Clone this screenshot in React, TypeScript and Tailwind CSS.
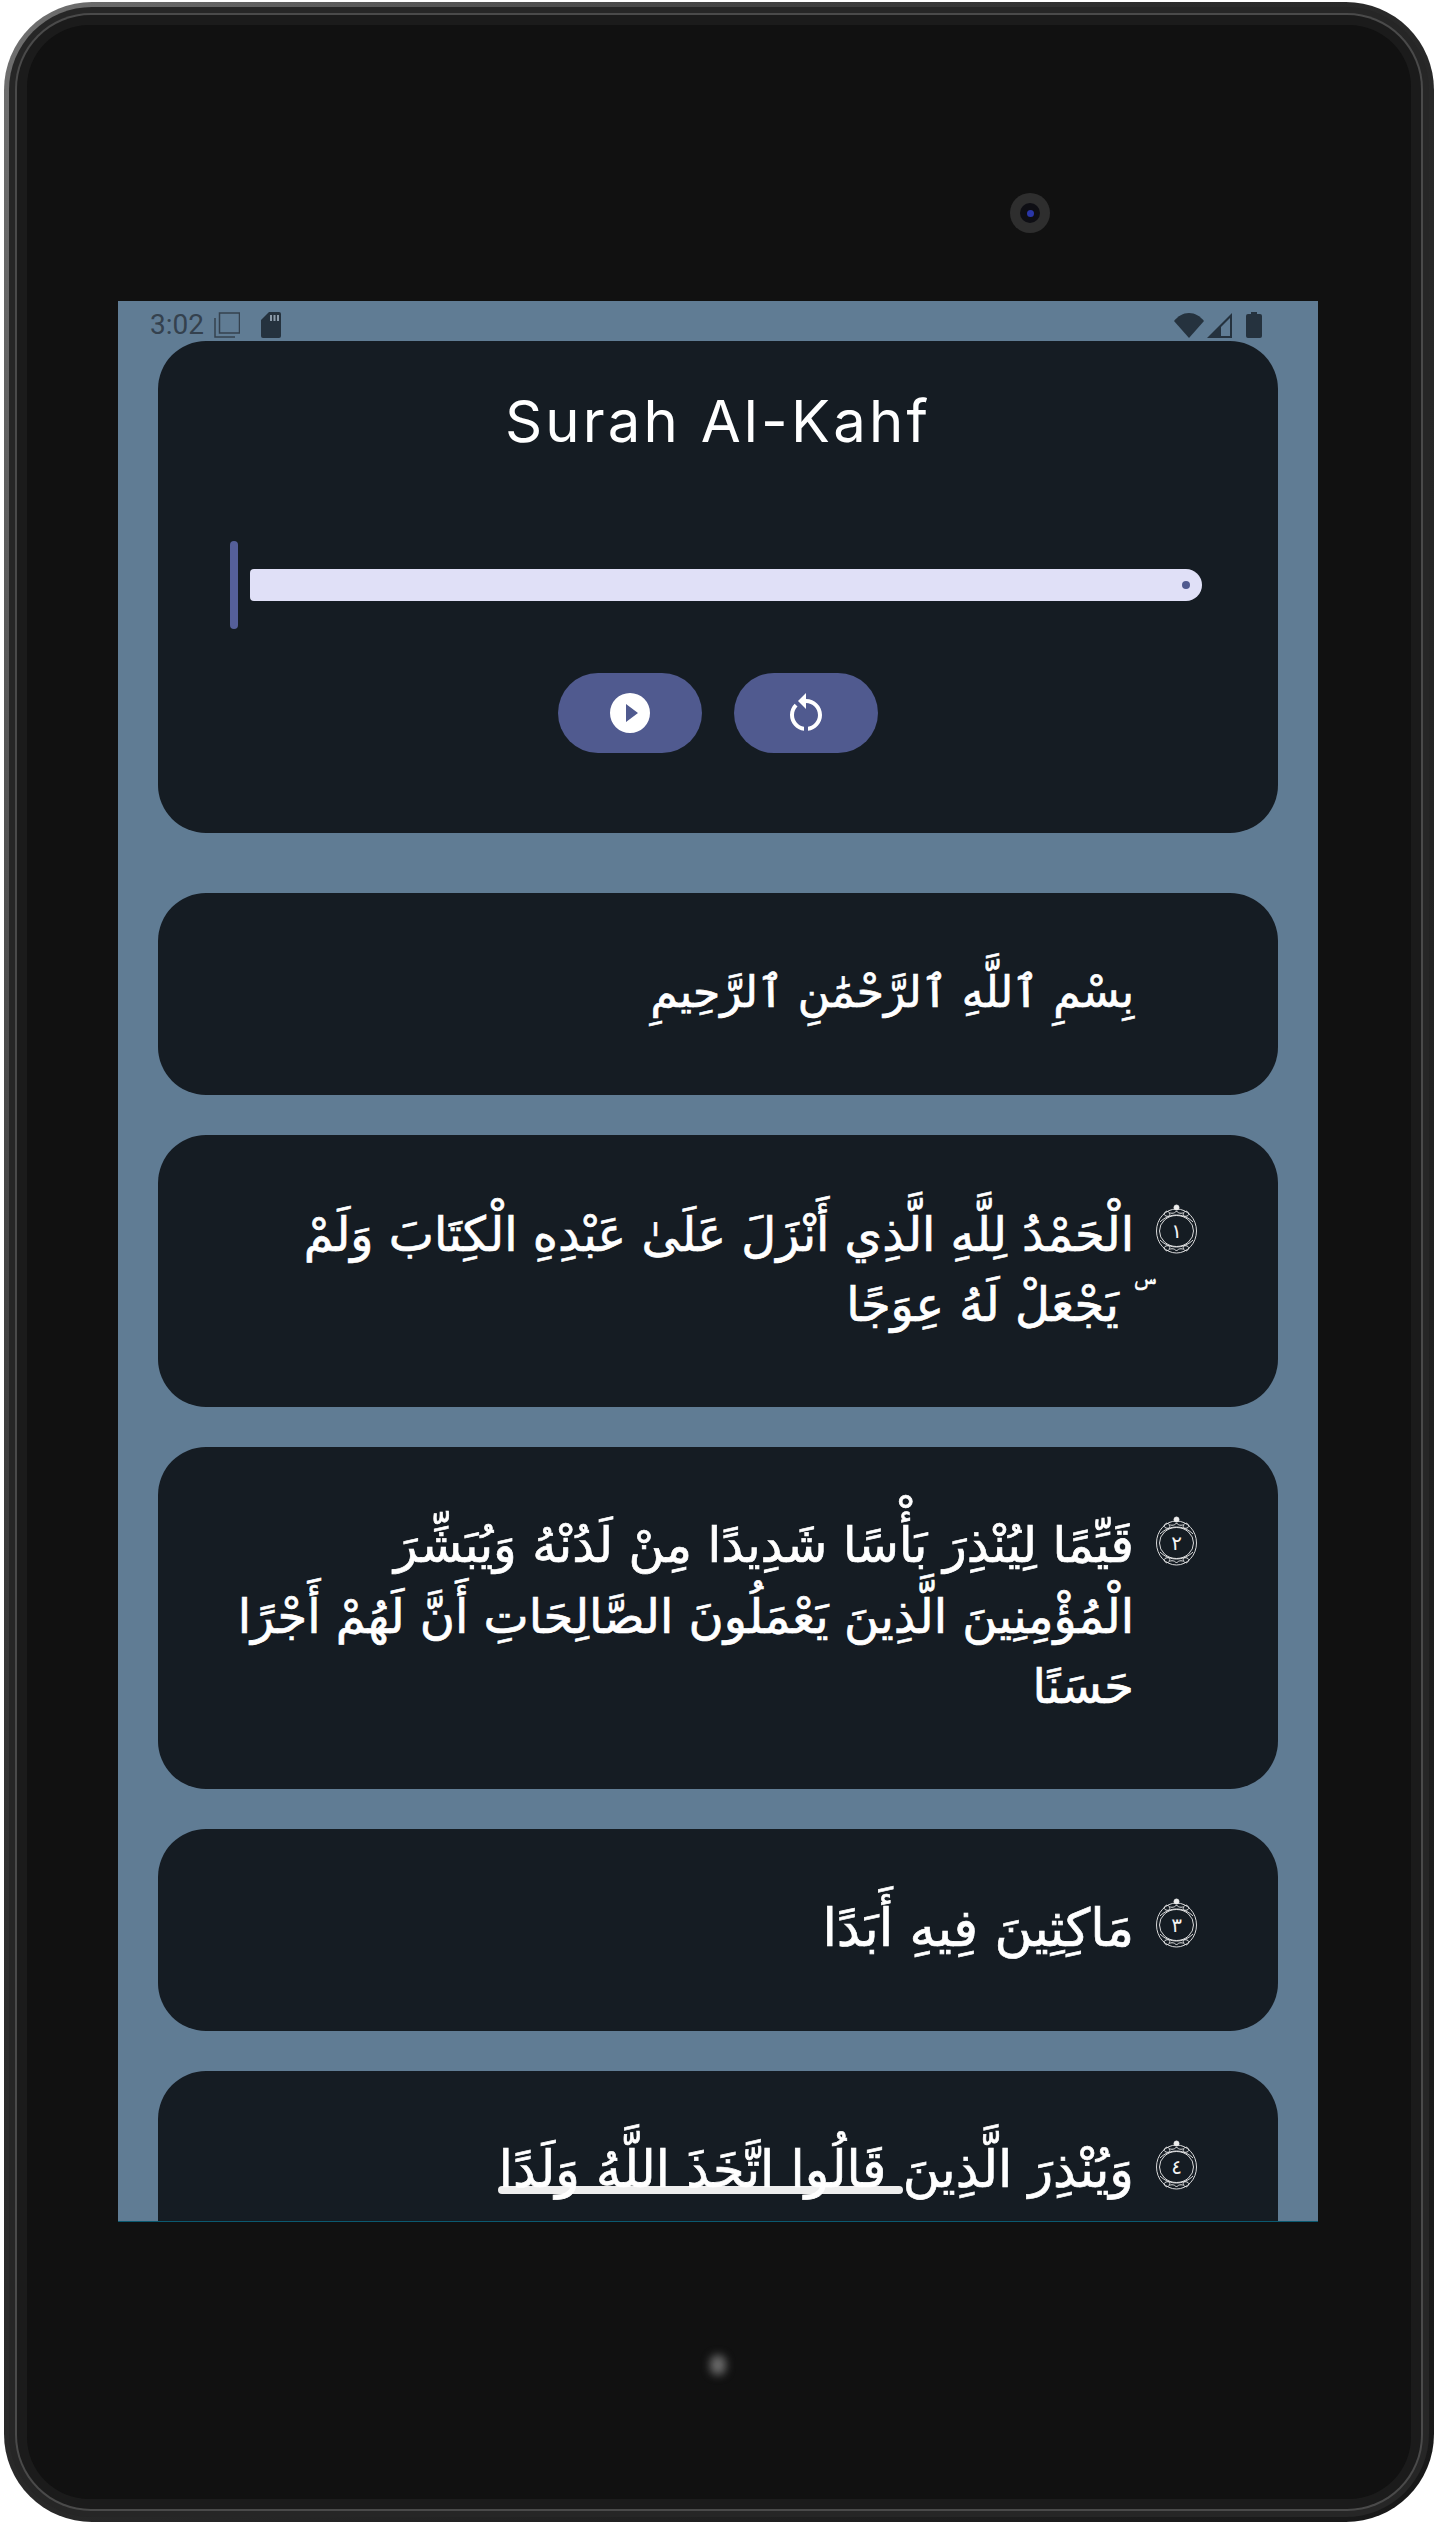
const ayat = [
  { n: "", size: ["text-[44px]"], lines: ["بِسْمِ ٱللَّهِ ٱلرَّحْمَٰنِ ٱلرَّحِيمِ"] },
  { n: "١", size: ["text-[48px]", "text-[48px]"], lines: ["الْحَمْدُ لِلَّهِ الَّذِي أَنْزَلَ عَلَىٰ عَبْدِهِ الْكِتَابَ وَلَمْ", "ۜ يَجْعَلْ لَهُ عِوَجًا"] },
  { n: "٢", size: ["text-[49px]", "text-[48px]", "text-[48px]"], lines: ["قَيِّمًا لِيُنْذِرَ بَأْسًا شَدِيدًا مِنْ لَدُنْهُ وَيُبَشِّرَ", "الْمُؤْمِنِينَ الَّذِينَ يَعْمَلُونَ الصَّالِحَاتِ أَنَّ لَهُمْ أَجْرًا", "حَسَنًا"] },
  { n: "٣", size: ["text-[52px]"], lines: ["مَاكِثِينَ فِيهِ أَبَدًا"] },
  { n: "٤", size: ["text-[51px]"], lines: ["وَيُنْذِرَ الَّذِينَ قَالُوا اتَّخَذَ اللَّهُ وَلَدًا"], bar: true },
];

function Marker({ n }: { n: string }) {
  return (
    <svg width="41" height="50" viewBox="0 0 41 50" fill="none" stroke="#eeeeee" strokeWidth="0.9" className="mt-[3px] shrink-0">
      <ellipse cx="20.5" cy="27" rx="20" ry="22" />
      <ellipse cx="20.5" cy="27" rx="17" ry="15.5" />
      <circle cx="20.5" cy="3.500" r="2.500" fill="#eeeeee" />
      <path d="M20.500 7c-2 3-7 3-9 0M20.500 7c2 3 7 3 9 0" />
      <path d="M11 7c-3 1-4 4-1 5s5-1 3-3M30 7c3 1 4 4 1 5s-5-1-3-3" />
      <path d="M4 18c5-5 11-7 16.500-7S32 13 37 18" />
      <path d="M4 36c5 5 11 7 16.500 7S32 41 37 36" />
      <path d="M20.500 47c-2-3-7-3-9 0M20.500 47c2-3 7-3 9 0" />
      <path d="M11 47c-3-1-4-4-1-5s5 1 3 3M30 47c3-1 4-4 1-5s-5 1-3 3" />
      <text x="20.500" y="34" textAnchor="middle" fontSize="20" fill="#f5f5f5" stroke="none" fontFamily="'DejaVu Sans', sans-serif">{n}</text>
    </svg>
  );
}

function Ayah({ n, lines, size, bar }: { n: string; lines: string[]; size: string[]; bar?: boolean }) {
  return (
    <div className="relative flex flex-row-reverse gap-[22px] rounded-[48px] bg-[#151c23] py-[66px] pr-[81px] pl-[60px]">
      {n ? <Marker n={n} /> : <div className="w-[41px] shrink-0" />}
      <div dir="rtl" className="relative flex-1 text-right font-['DejaVu_Sans',sans-serif] leading-[70px] text-white [-webkit-text-stroke:0.7px_white]">
        {bar && <div className="absolute top-[49px] left-[280px] h-2 w-[405px] rounded-full bg-[#eeeeee]" />}
        {lines.map((l, i) => (
          <div key={l} className={`relative -top-[2px] whitespace-nowrap ${size[i]}`}>{l}</div>
        ))}
      </div>
    </div>
  );
}

export default function App() {
  return (
    <div className="h-[2527px] w-[1437px] overflow-hidden bg-white pt-[2px] pr-[3px] pb-[5px] pl-[4px]">
      <div className="relative h-full rounded-[88px] bg-linear-to-br from-[#707070] via-[#2c2c2c] via-40% to-[#181818] p-[5px]">
        <div className="h-full rounded-[83px] bg-[#262626] p-[6px]">
          <div className="h-full rounded-[76px] bg-[#4a4a4a] p-[2px]">
            <div className="h-full rounded-[74px] bg-[#1b1b1b] p-[10px]">
              <div className="h-full rounded-[62px] bg-[#111111] pt-[276px] pl-[91px]">
                <div className="h-[1921px] w-[1200px] overflow-hidden border-b border-[#0b5a70] bg-[#607c94] font-['Roboto',sans-serif]">
                  <div className="flex h-[40px] items-center px-[32px] pt-[8px]">
                    <span className="text-[28px] leading-none text-[#34414e]">3:02</span>
                    <svg width="26" height="26" viewBox="0 0 26 26" fill="none" stroke="#34414e" strokeWidth="1.500" className="ml-[10px]">
                      <rect x="5.500" y="1" width="20" height="20" />
                      <path d="M1 6v19h20" />
                    </svg>
                    <svg width="20" height="26" viewBox="0 0 20 26" className="ml-[21px]">
                      <path d="M8 0h10a2 2 0 0 1 2 2v22a2 2 0 0 1-2 2H2a2 2 0 0 1-2-2V8z" fill="#25323e" />
                      <path d="M9 3h2v6H9zM12.500 3h2v6h-2zM16 3h2v6h-2z" fill="#8b9aa8" />
                    </svg>
                    <div className="flex-1" />
                    <svg width="30" height="25" viewBox="0 0 30 25">
                      <path d="M0 8C4 3 9 0 15 0s11 3 15 8L15 25z" fill="#25323e" />
                    </svg>
                    <svg width="25" height="25" viewBox="0 0 25 25" className="ml-[3px]">
                      <path d="M25 0v25H0z" fill="#25323e" />
                      <path d="M23 5v18h-9V14z" fill="#607c94" />
                    </svg>
                    <svg width="16" height="26" viewBox="0 0 16 26" className="mr-[24px] ml-[14px]">
                      <path d="M5 0h6v2h3a2 2 0 0 1 2 2v20a2 2 0 0 1-2 2H2a2 2 0 0 1-2-2V4a2 2 0 0 1 2-2h3z" fill="#25323e" />
                    </svg>
                  </div>

                  <div className="mx-[40px] flex flex-col gap-[40px]">
                    <div className="mb-[20px] h-[492px] rounded-[48px] bg-[#151c23] pt-[38px]">
                      <h1 className="text-center font-['Inter',sans-serif] text-[58px] leading-[84px] font-normal tracking-[3.2px] text-white">Surah Al-Kahf</h1>
                      <div className="mt-[78px] flex items-center pr-[76px] pl-[72px]">
                        <div className="h-[88px] w-[8px] rounded-full bg-[#555f99]" />
                        <div className="ml-[12px] flex h-[32px] flex-1 items-center justify-end rounded-l-[4px] rounded-r-[16px] bg-[#e0e0f7] pr-[12px]">
                          <div className="h-[8px] w-[8px] rounded-full bg-[#505a8f]" />
                        </div>
                      </div>
                      <div className="mt-[44px] flex justify-center gap-[32px]">
                        <button className="flex h-[80px] w-[144px] items-center justify-center rounded-[40px] bg-[#505a8f]">
                          <svg width="48" height="48" viewBox="0 0 24 24" fill="#ffffff">
                            <path fillRule="evenodd" d="M12 2a10 10 0 1 0 0 20 10 10 0 0 0 0-20zm-2 5.500v9l6-4.500z" />
                          </svg>
                        </button>
                        <button className="flex h-[80px] w-[144px] items-center justify-center rounded-[40px] bg-[#505a8f]">
                          <svg width="48" height="48" viewBox="0 0 24 24" fill="#ffffff">
                            <path d="M12 5V2L8 6l4 4V7c3.310 0 6 2.690 6 6 0 2.970-2.170 5.430-5 5.910v2.020c3.950-.49 7-3.850 7-7.930 0-4.420-3.580-8-8-8zm-6 8c0-1.650.67-3.150 1.760-4.240L6.340 7.340C4.900 8.790 4 10.790 4 13c0 4.080 3.050 7.440 7 7.930v-2.020c-2.830-.48-5-2.940-5-5.910z" />
                          </svg>
                        </button>
                      </div>
                    </div>
                    {ayat.map((a) => (
                      <Ayah key={a.lines[0]} n={a.n} lines={a.lines} size={a.size} bar={a.bar} />
                    ))}
                  </div>
                </div>
              </div>
            </div>
          </div>
        </div>
        <div className="absolute top-[191px] left-[1006px] flex h-[40px] w-[40px] items-center justify-center rounded-full bg-[#2e2e2e]">
          <div className="flex h-[20px] w-[20px] items-center justify-center rounded-full bg-[#0e0e14]">
            <div className="h-[7px] w-[7px] rounded-full bg-[#2a36a8]" />
          </div>
        </div>
        <div className="absolute top-[2353px] left-[706px] h-[20px] w-[16px] rounded-full bg-[#6a6a6a] blur-[4px]" />
      </div>
    </div>
  );
}
